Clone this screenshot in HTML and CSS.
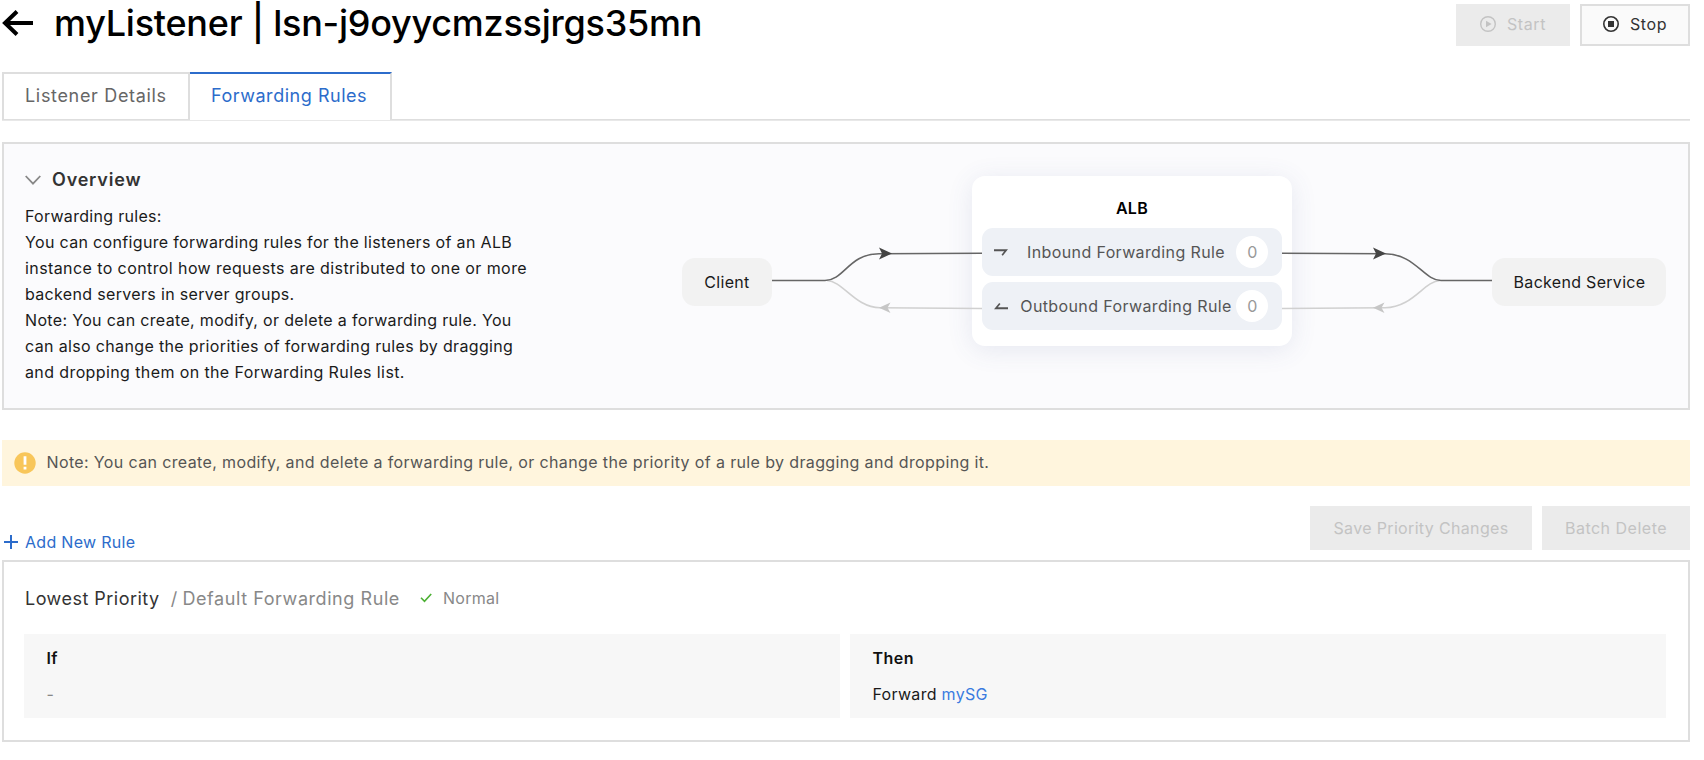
FILE: index.html
```html
<!DOCTYPE html>
<html lang="en">
<head>
<meta charset="utf-8">
<title>myListener</title>
<link rel="stylesheet" href="styles.css">
</head>
<body>
<div class="page">
  <header class="header">
    <svg class="back" width="32" height="26" viewBox="0 0 32 26" fill="none" stroke="#000" stroke-width="4"><path d="M31 13H3M15 1.5L3 13l12 11.5"/></svg>
    <h1 class="title">myListener | lsn-j9oyycmzssjrgs35mn</h1>
    <div class="actions">
      <button class="btn btn-off btn-start"><svg width="16" height="16" viewBox="0 0 16 16"><circle cx="8" cy="8" r="7.3" fill="none" stroke="currentColor" stroke-width="1.4"/><path d="M6 4.8v6.4L11.6 8z" fill="currentColor"/></svg><span>Start</span></button>
      <button class="btn btn-stop"><svg width="16" height="16" viewBox="0 0 16 16"><circle cx="8" cy="8" r="7.2" fill="none" stroke="currentColor" stroke-width="1.6"/><path d="M5 5h6v6H5z" fill="currentColor"/></svg><span>Stop</span></button>
    </div>
  </header>

  <nav class="tabs">
    <a class="tab tab-details"><span>Listener Details</span></a>
    <a class="tab tab-rules"><span>Forwarding Rules</span></a>
  </nav>

  <section class="overview">
    <div class="intro">
      <h2 class="overview-title"><svg width="16" height="10" viewBox="0 0 16 10" fill="none" stroke="#888" stroke-width="1.8"><path d="M.7 1L8 8.6 15.3 1"/></svg><span>Overview</span></h2>
      <p class="desc">Forwarding rules:<br>
        <span class="l2">You can configure forwarding rules for the listeners of an ALB</span><br>
        <span class="l3">instance to control how requests are distributed to one or more</span><br>
        <span class="l4">backend servers in server groups.</span><br>
        <span class="l5">Note: You can create, modify, or delete a forwarding rule. You</span><br>
        <span class="l6">can also change the priorities of forwarding rules by dragging</span><br>
        <span class="l7">and dropping them on the Forwarding Rules list.</span></p>
    </div>
    <div class="flow">
      <div class="node node-client"><span>Client</span></div>
      <div class="alb">
        <div class="alb-title">ALB</div>
        <div class="alb-row">
          <svg width="14" height="7" viewBox="0 0 14 7" fill="#555"><path d="M0 .3h14L8.800 6.800 7.500 5.700 10.200 2.200H0z"/></svg>
          <span class="alb-label inbound">Inbound Forwarding Rule</span><span class="count">0</span>
        </div>
        <div class="alb-row">
          <svg width="14" height="7" viewBox="0 0 14 7" fill="#555"><path d="M14 6.200H0L5.200 0 6.500 1 3.800 4.300H14z"/></svg>
          <span class="alb-label outbound">Outbound Forwarding Rule</span><span class="count">0</span>
        </div>
      </div>
      <div class="node node-backend"><span>Backend Service</span></div>
      <svg class="wires" width="984" height="170" viewBox="0 0 984 170" fill="none" stroke-width="1.6">
        <g stroke="#d0d0d0">
          <path d="M145 104.500C161 105 173 131.500 198 131.700L300 132.500"/>
          <path d="M600 132.500L703 131.700C731 131.500 742 105 758 104.500"/>
        </g>
        <g stroke="#666">
          <path d="M90 104.500H143C162 104.500 167 77.700 197 77.700L300 77.300"/>
          <path d="M600 77.300L703 77.700C733 78 742 104.500 759 104.500H810"/>
        </g>
        <path d="M197 71.500L210 77.500 197 83.500 200 77.500zM691 71.500L704 77.500 691 83.500 694 77.500z" fill="#444"/>
        <path d="M208.500 126.500L197 131.700 208.500 137 205.500 131.700zM702.500 126.500L691 131.700 702.500 137 699.500 131.700z" fill="#c6c6c6"/>
      </svg>
    </div>
  </section>

  <div class="notice">
    <svg width="22" height="22" viewBox="0 0 22 22"><circle cx="11" cy="11" r="10.700" fill="#f8c65a"/><path d="M9.600 4.300h2.800v8.500H9.600zM9.600 14.800h2.800v2.700H9.600z" fill="#fff"/></svg>
    <span>Note: You can create, modify, and delete a forwarding rule, or change the priority of a rule by dragging and dropping it.</span>
  </div>

  <div class="toolbar">
    <a class="add"><svg width="14" height="14" viewBox="0 0 14 14" stroke="currentColor" stroke-width="2"><path d="M0 7h14M7 0v14"/></svg><span>Add New Rule</span></a>
    <div class="bulk">
      <button class="btn btn-off btn-save"><span>Save Priority Changes</span></button>
      <button class="btn btn-off btn-batch"><span>Batch Delete</span></button>
    </div>
  </div>

  <section class="rule">
    <div class="rule-head">
      <span class="priority">Lowest Priority</span><span class="slash">/</span><span class="name">Default Forwarding Rule</span>
      <svg width="12" height="10" viewBox="0 0 12 10" fill="none" stroke="#4cb034" stroke-width="1.600"><path d="M1 4.800l3.500 3.600L11.200 1"/></svg>
      <span class="state">Normal</span>
    </div>
    <div class="rule-body">
      <div class="cell"><div class="cell-title">If</div><div class="cell-none">-</div></div>
      <div class="cell"><div class="cell-title then">Then</div><div class="cell-text">Forward <a>mySG</a></div></div>
    </div>
  </section>
</div>
</body>
</html>
```
FILE: styles.css
```css
* { box-sizing: border-box; }
body { margin: 0; background: #fff; font-family: Inter, "Liberation Sans", sans-serif; font-size: 16px; color: #1a1a1a; letter-spacing: .3px; }
h1, h2, p { margin: 0; }
svg { flex: none; display: block; }
span, a, h1 { white-space: nowrap; }
.page { width: 1688px; margin-left: 2px; }

.header { height: 72px; padding-top: 4px; display: flex; align-items: flex-start; }
.back { margin-top: 6px; }
.title { margin: -1px 0 0 20px; font-size: 36px; line-height: 40px; font-weight: 500; letter-spacing: -.25px; color: #000; }
.actions { margin-left: auto; display: flex; gap: 10px; }
.btn { font: inherit; letter-spacing: .6px; border: 0; padding: 0; display: flex; align-items: center; }
.btn-off { background: #ebebeb; color: #c3c3c3; }
.btn-start { width: 114px; height: 42px; padding: 0 0 2px 24px; gap: 11px; }
.btn-stop { width: 110px; height: 42px; padding: 0 0 2px 21px; gap: 11px; background: #fafafa; border: 2px solid #dedede; color: #333; }

.tabs { height: 49px; display: flex; align-items: flex-start; border-bottom: 1px solid #e8e8e8; box-shadow: inset 0 -1px #dedede; font-size: 18px; }
.tab { height: 47px; border: 2px solid #dedede; border-bottom: 0; display: flex; align-items: center; color: #666; }
.tab-details { width: 188px; padding: 0 0 2px 21px; letter-spacing: .67px; }
.tab-rules { width: 202px; height: 48px; padding: 0 0 3px 21px; border-left: 0; border-top-color: #2c6ccb; color: #2c6ccb; background: #fff; letter-spacing: .53px; }

.overview { margin-top: 21px; height: 268px; border: 2px solid #dedede; background: #fbfbfd; display: flex; }
.intro { width: 678px; padding: 22px 0 0 21px; }
.overview-title { display: flex; align-items: center; gap: 11px; font-size: 18px; line-height: 28px; font-weight: 600; color: #333; letter-spacing: .8px; }
.desc { margin-top: 9px; line-height: 26px; }
.l2, .l4, .l5 { letter-spacing: .335px; }
.l3 { letter-spacing: .41px; }
.l6 { letter-spacing: .35px; }
.l7 { letter-spacing: .39px; }
.flow { position: relative; width: 984px; padding-top: 32px; display: flex; align-items: flex-start; }
.node { height: 48px; margin-top: 82px; border-radius: 13px; background: #f2f2f2; display: flex; align-items: center; justify-content: center; }
.node-client { width: 90px; }
.node-backend { width: 174px; margin-left: 200px; padding-left: 1px; }
.alb { width: 320px; height: 170px; margin-left: 200px; padding: 18px 10px 0; border-radius: 13px; background: #fff; box-shadow: 0 4px 26px rgba(70, 90, 150, .12); display: flex; flex-direction: column; gap: 6px; }
.alb-title { line-height: 28px; text-align: center; font-weight: 600; color: #000; }
.alb-row { height: 48px; padding: 0 14px 0 12px; border-radius: 11px; background: #eef1f6; display: flex; align-items: center; color: #555; }
.alb-label { flex: 1; padding-left: 8px; display: flex; justify-content: center; letter-spacing: .38px; }
.count { width: 32px; height: 32px; border-radius: 50%; background: #fff; color: #999; display: flex; align-items: center; justify-content: center; padding-left: 1px; }
.wires { position: absolute; left: 0; top: 32px; }

.notice { margin-top: 30px; height: 46px; padding: 0 0 0 12px; display: flex; align-items: center; gap: 10.5px; background: #fff5dd; color: #555; letter-spacing: .367px; }
.notice span { margin-top: -2px; }

.toolbar { height: 74px; padding-top: 20px; display: flex; justify-content: space-between; }
.add { display: flex; align-items: center; gap: 7px; height: 24px; margin: 24px 0 0 2px; color: #2c6ccb; }
.bulk { display: flex; gap: 10px; }
.bulk .btn { height: 44px; justify-content: center; }
.btn-save { width: 222px; letter-spacing: .34px; }
.btn-batch { width: 148px; letter-spacing: .5px; }

.rule { height: 182px; border: 2px solid #dedede; padding: 22px 22px 0 20px; }
.rule-head { display: flex; align-items: center; height: 28px; padding-left: 1px; font-size: 18px; color: #888; }
.priority { color: #333; letter-spacing: .48px; }
.slash { margin: 0 5px 0 11px; }
.name { letter-spacing: .57px; }
.rule-head svg { margin-left: 20px; }
.state { margin-left: 11px; font-size: 16px; }
.rule-body { margin-top: 22px; display: grid; grid-template-columns: 816px 816px; gap: 10px; }
.cell { height: 84px; padding: 12px 0 0 22.5px; background: #f7f7f7; line-height: 24px; }
.cell-title { font-weight: 600; color: #111; }
.then { letter-spacing: .45px; }
.cell-none { margin-top: 12px; color: #888; }
.cell-text { margin-top: 12px; }
.cell-text a { color: #3a7be0; }
```
